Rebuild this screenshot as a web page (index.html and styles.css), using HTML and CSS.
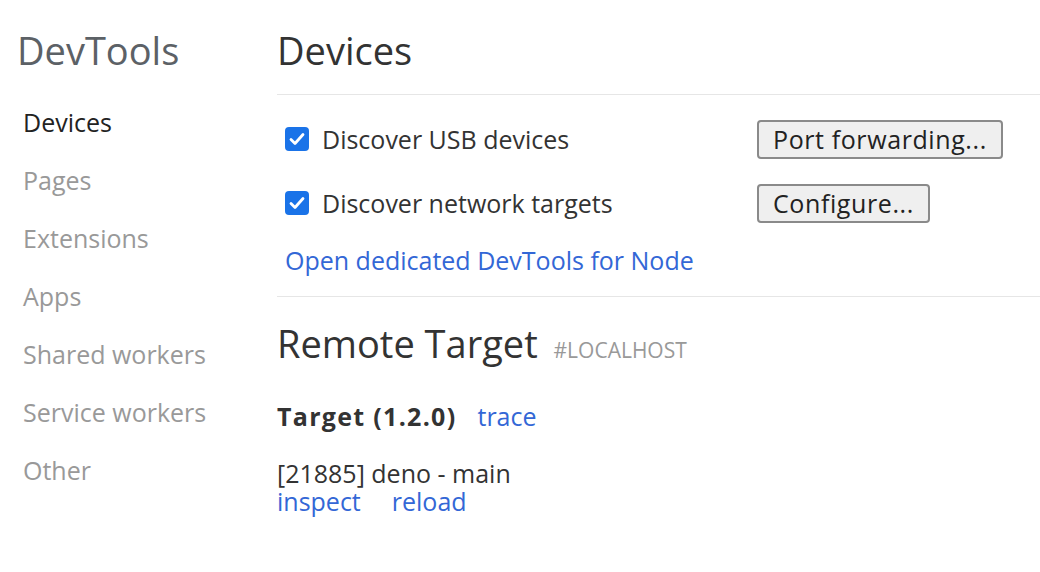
FILE: index.html
```html
<!DOCTYPE html>
<html>
<head>
<meta charset="utf-8">
<link rel="stylesheet" href="styles.css">
</head>
<body>
<div class="page">
  <nav class="sidebar">
    <h1 class="brand">DevTools</h1>
    <ul class="nav">
      <li class="nav-item selected">Devices</li>
      <li class="nav-item">Pages</li>
      <li class="nav-item">Extensions</li>
      <li class="nav-item">Apps</li>
      <li class="nav-item">Shared workers</li>
      <li class="nav-item">Service workers</li>
      <li class="nav-item">Other</li>
    </ul>
  </nav>
  <main class="content">
    <h2 class="section-title">Devices</h2>
    <div class="devices-box">
      <div class="option-row">
        <label class="check"><span class="box"><svg viewBox="0 0 24 24" width="24" height="24"><rect x="0" y="0" width="24" height="24" rx="4" fill="#1a73e8"/><path d="M6 12.5l4 4 8-9" fill="none" stroke="#fff" stroke-width="2.8" stroke-linecap="round" stroke-linejoin="round"/></svg></span>Discover USB devices</label>
        <button class="btn">Port forwarding...</button>
      </div>
      <div class="option-row">
        <label class="check"><span class="box"><svg viewBox="0 0 24 24" width="24" height="24"><rect x="0" y="0" width="24" height="24" rx="4" fill="#1a73e8"/><path d="M6 12.5l4 4 8-9" fill="none" stroke="#fff" stroke-width="2.8" stroke-linecap="round" stroke-linejoin="round"/></svg></span>Discover network targets</label>
        <button class="btn">Configure...</button>
      </div>
      <a class="link node-link">Open dedicated DevTools for Node</a>
    </div>
    <div class="remote">
      <h2 class="section-title remote-title">Remote Target <span class="host">#LOCALHOST</span></h2>
      <div class="target-head"><span class="target-name">Target (1.2.0)</span><a class="link">trace</a></div>
      <div class="target-item">
        <div class="target-desc">[21885] deno - main</div>
        <div class="actions"><a class="link">inspect</a><a class="link">reload</a></div>
      </div>
    </div>
  </main>
</div>
</body>
</html>
```
FILE: styles.css
```css
* { box-sizing: border-box; }
html, body { margin: 0; padding: 0; background: #fff; }
body {
  font-family: "Open Sans", "Noto Sans", sans-serif;
  color: #333;
  width: 1040px;
  height: 572px;
  overflow: hidden;
}
.page { display: flex; }
.sidebar { width: 277px; flex: none; padding-left: 17px; }
.brand {
  margin: 0;
  padding-top: 26px;
  font-size: 38px;
  font-weight: 400;
  line-height: 48px;
  color: #5c6166;
}
.nav { list-style: none; margin: 33px 0 0 6px; padding: 0; }
.nav-item { font-size: 25px; line-height: 30px; height: 58px; color: #999; }
.nav-item.selected { color: #222; }
.content { flex: 1; }
.section-title {
  margin: 0;
  padding-top: 26px;
  font-size: 38px;
  font-weight: 400;
  line-height: 48px;
  color: #333;
}
.devices-box {
  margin-top: 20px;
  border-top: 1px solid #e6e6e6;
  border-bottom: 1px solid #e6e6e6;
  padding: 24px 0 21px 8px;
}
.option-row { display: flex; align-items: center; height: 40px; margin-bottom: 24px; }
.option-row + .option-row { margin-bottom: 22px; }
.check { display: flex; align-items: center; width: 472px; font-size: 25px; color: #333; }
.box { display: flex; width: 24px; height: 24px; margin-right: 13px; }
.btn {
  font-family: inherit;
  font-size: 25px;
  letter-spacing: 0.6px;
  color: #222;
  background: #efefef;
  border: 2px solid #8a8a8a;
  border-radius: 4px;
  height: 39px;
  padding: 0 14px;
  line-height: 33px;
}
.link { color: #3367d6; font-size: 25px; text-decoration: none; }
.node-link { display: block; line-height: 30px; }
.remote-title { padding-top: 22px; }
.host { font-size: 21px; color: #999; text-transform: uppercase; margin-left: 6px; }
.target-head { display: flex; align-items: baseline; gap: 21px; margin-top: 26px; font-size: 25px; line-height: 32px; }
.target-name { font-weight: 700; letter-spacing: 1.3px; }
.target-item { margin-top: 27px; font-size: 25px; line-height: 28px; }
.actions { display: flex; gap: 31px; }
```
